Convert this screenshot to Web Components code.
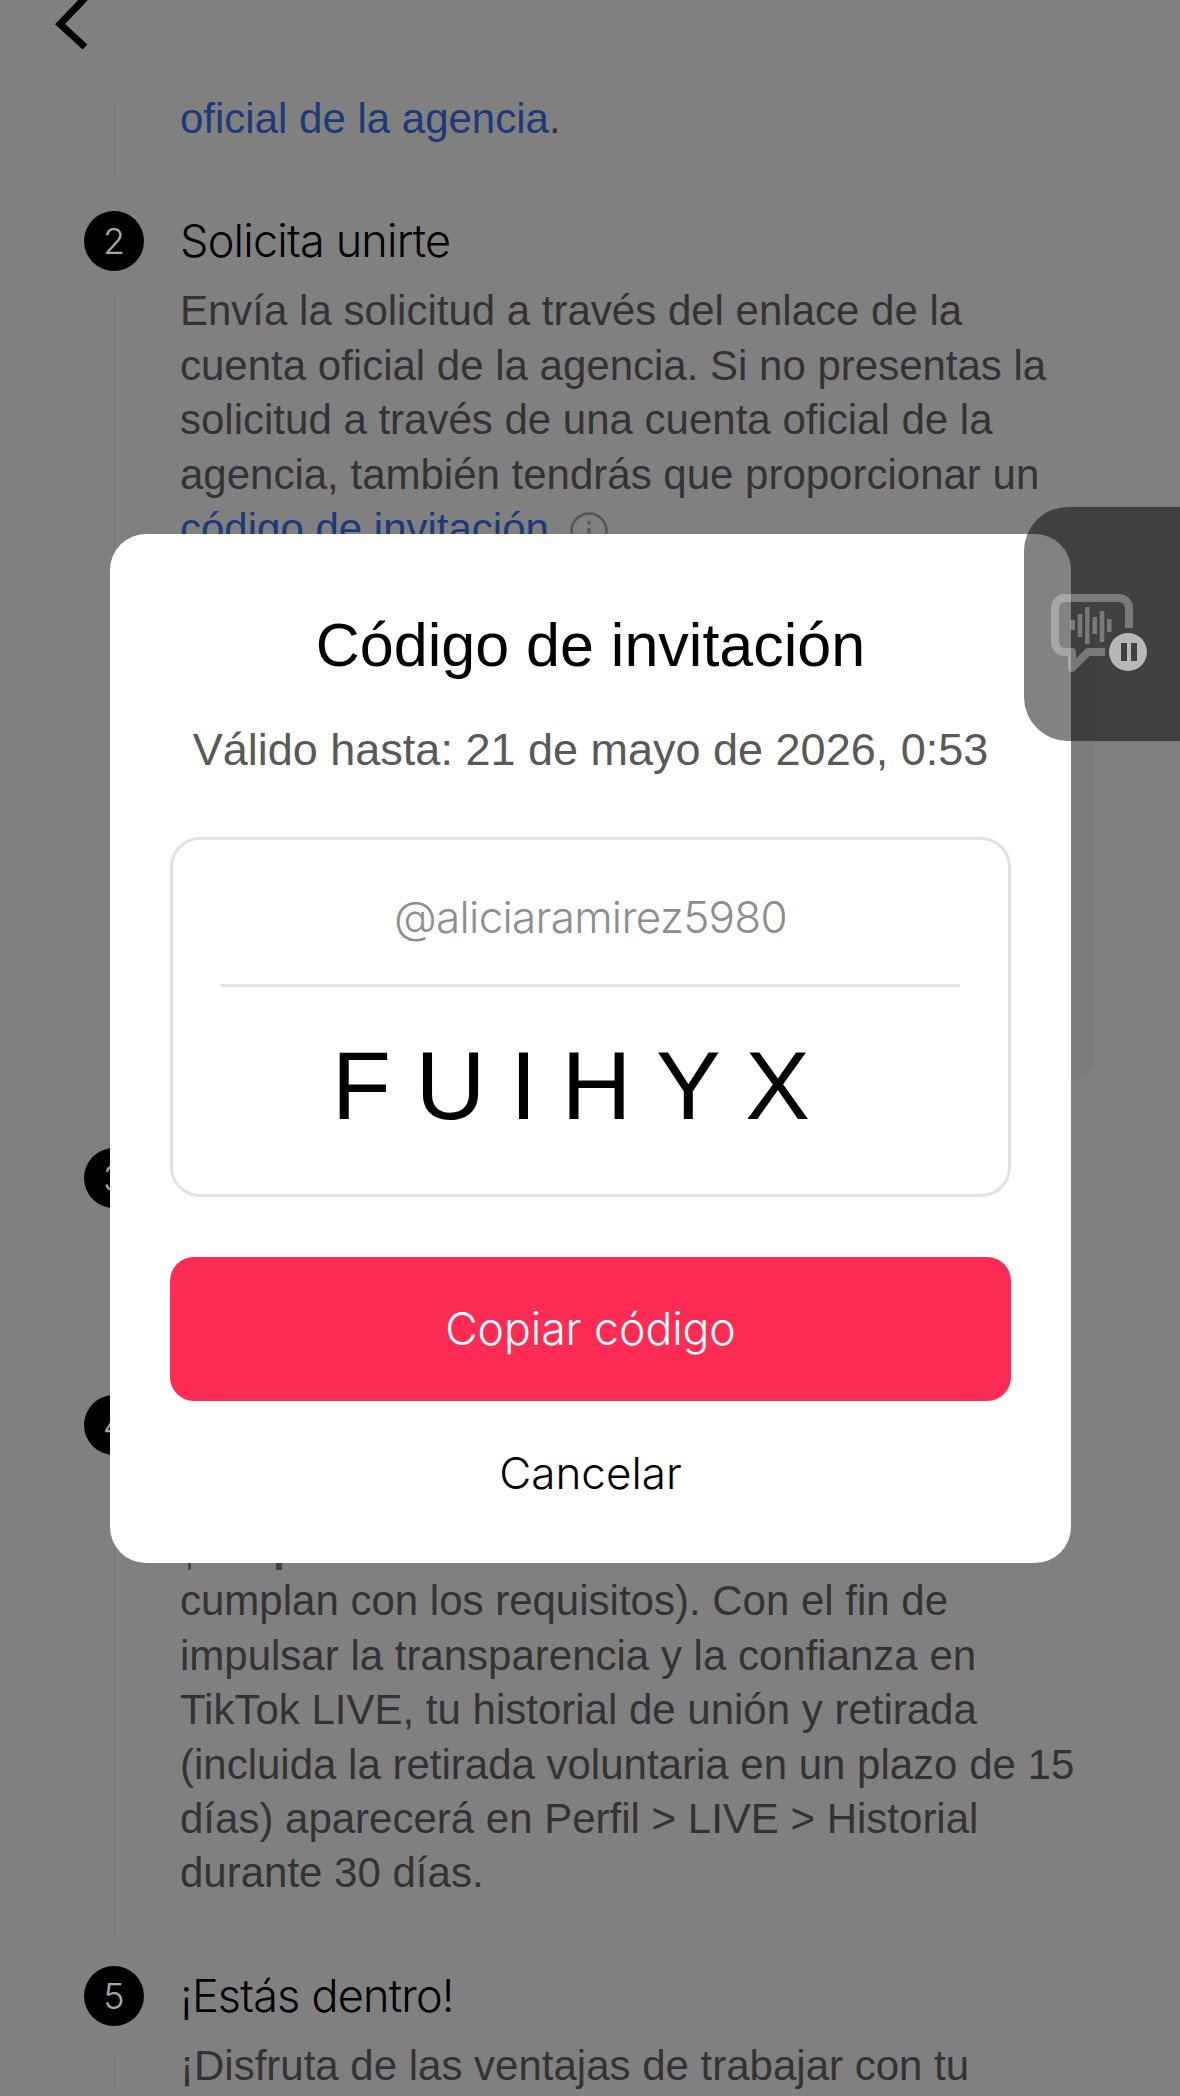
<!doctype html>
<html>
<head>
<style>
  html, body { margin: 0; padding: 0; background: #808080; }
  body { width: 1180px; height: 2096px; overflow: hidden; font-family: "Liberation Sans", Arial, sans-serif; position: relative; }
  .link { color: #1d3a78; }
  .info { vertical-align: -7px; margin-left: 9px; }
</style>
</head>
<body>

<template id="t-step">
  <style>
    :host { display: grid; grid-template-columns: 60px 1fr; column-gap: 36px; padding-left: 84px; margin-top: var(--gap, 32px); min-height: var(--min, 0); }
    .rail { display: flex; flex-direction: column; align-items: center; }
    .num { width: 60px; height: 60px; border-radius: 50%; background: #000; color: #a6a6a6; font: 300 36px/60px "Inter", sans-serif; text-align: center; flex: none; }
    .line { width: 1px; flex: 1; background: #777; margin-top: 24px; }
    h3 { margin: 0 0 13px; min-height: 60px; font: 300 45px/60px "Inter", sans-serif; letter-spacing: -0.8px; color: #000; }
    .body { font: 42px/54.4px "Liberation Sans", sans-serif; color: #333; white-space: nowrap; padding-bottom: var(--pad, 0); }
    :host([continued]) .num, :host([continued]) h3 { display: none; }
    :host([continued]) .line { margin-top: 10px; }
  </style>
  <div class="rail"><div class="num"><slot name="num"></slot></div><div class="line"></div></div>
  <div><h3><slot name="title"></slot></h3><div class="body"><slot></slot></div></div>
</template>

<template id="t-card">
  <style>
    :host { display: block; width: 915px; height: 480px; margin-top: 44px; margin-bottom: -3px; background: #7b7b7b; border-radius: 24px; }
  </style>
</template>

<template id="t-cut-line">
  <style>
    /* top margin collapses with the h3 margin above it */
    :host { display: flex; height: 8px; margin: 108px 0 3px; padding-left: 8px; }
    i { display: block; width: 3px; height: 7px; background: #444; }
    i:nth-child(1) { width: 4px; height: 5px; border-radius: 0 0 0 4px; margin-right: 96px; }
    i:nth-child(2) { margin-right: 85px; }
  </style>
  <i></i><i></i><i></i>
</template>

<template id="t-dialog">
  <style>
    :host { position: absolute; left: 110px; top: 534px; width: 961px; height: 1029px; background: #fff; border-radius: 36px; box-sizing: border-box; padding: 0 60px; display: flex; flex-direction: column; align-items: center; }
    h2 { margin: 76px 0 0; font: 400 61px/70px "Liberation Sans", sans-serif; color: #000; white-space: nowrap; }
    .valid { margin-top: 45px; font: 45px/50px "Liberation Sans", sans-serif; color: #595959; white-space: nowrap; }
    .box { margin-top: 62px; width: 841px; height: 360px; box-sizing: border-box; border: 3px solid #e2e2e2; border-radius: 30px; padding: 0 48px; display: flex; flex-direction: column; align-items: center; }
    .user { margin-top: 49px; font: 300 44px/56px "Inter", sans-serif; letter-spacing: -0.7px; color: #8e8e8e; }
    hr { width: 100%; height: 3px; margin: 39px 0 0; border: 0; background: #e2e2e2; }
    .code { margin-top: 51px; font: 400 97px/96px "Liberation Sans", sans-serif; letter-spacing: 24.5px; margin-right: 15px; color: #000; white-space: nowrap; }
    .copy { margin-top: 60px; width: 841px; height: 144px; background: #fe2c55; border-radius: 24px; color: #fff; font: 300 44.5px/144px "Inter", sans-serif; text-align: center; }
    .cancel { margin-top: 44px; font: 300 44px/56px "Inter", sans-serif; color: #000; }
  </style>
  <h2><slot name="title"></slot></h2>
  <div class="valid"><slot name="valid"></slot></div>
  <div class="box">
    <div class="user"><slot name="user"></slot></div>
    <hr>
    <div class="code"><slot name="code"></slot></div>
  </div>
  <div class="copy"><slot name="copy"></slot></div>
  <div class="cancel"><slot name="cancel"></slot></div>
</template>

<template id="t-float">
  <style>
    :host { position: absolute; left: 1024px; top: 507px; width: 156px; height: 234px; background: rgba(0,0,0,.49); border-radius: 44px 0 0 44px; }
    svg { position: absolute; left: 24px; top: 84px; }
  </style>
  <svg width="110" height="90" viewBox="0 0 110 90" fill="none">
    <path d="M81 37V17a10 10 0 0 0-10-10H17a10 10 0 0 0-10 10v34a10 10 0 0 0 10 10h7v16l16-16h17" stroke="rgba(255,255,255,.3)" stroke-width="8" stroke-linejoin="round"/>
    <path d="M24.7 29v10M32 23v23M39.3 16v37M46.7 26v17M54 20v31M61.3 28v13" stroke="rgba(255,255,255,.3)" stroke-width="4.6"/>
    <circle cx="80" cy="61" r="19" fill="#b8b8b8"/>
    <path d="M73 52h6v18h-6zM83 52h6v18h-6z" fill="#404040"/>
  </svg>
</template>

<template id="t-back">
  <style>:host { position: absolute; left: 50px; top: 0; line-height: 0; }</style>
  <svg width="40" height="54" viewBox="0 0 40 54" fill="none"><path d="M35 -2L10 24l25 23" stroke="#000" stroke-width="7"/></svg>
</template>

<script>
  class StampedElement extends HTMLElement {
    constructor(templateId) {
      super();
      const root = this.attachShadow({mode: 'open'});
      root.appendChild(document.querySelector('#' + templateId).content.cloneNode(true));
    }
  }
  customElements.define('tk-step', class extends StampedElement { constructor() { super('t-step'); } });
  customElements.define('tk-card', class extends StampedElement { constructor() { super('t-card'); } });
  customElements.define('tk-cut-line', class extends StampedElement { constructor() { super('t-cut-line'); } });
  customElements.define('tk-dialog', class extends StampedElement { constructor() { super('t-dialog'); } });
  customElements.define('tk-float', class extends StampedElement { constructor() { super('t-float'); } });
  customElements.define('tk-back', class extends StampedElement { constructor() { super('t-back'); } });
</script>

<tk-back></tk-back>

<div style="padding-top:92px">
  <tk-step continued style="--gap:0px;--pad:33px">
    <span class="link">oficial de la agencia</span>.
  </tk-step>
  <tk-step style="--pad:39px">
    <span slot="num">2</span>
    <span slot="title">Solicita unirte</span>
    Envía la solicitud a través del enlace de la<br>
    cuenta oficial de la agencia. Si no presentas la<br>
    solicitud a través de una cuenta oficial de la<br>
    agencia, también tendrás que proporcionar un<br>
    <span class="link">código de invitación</span>.<svg class="info" width="38" height="38" viewBox="0 0 38 38" fill="none"><circle cx="19" cy="19" r="17.5" stroke="#555" stroke-width="2.6"/><path d="M19 16v12M19 9v3.5" stroke="#555" stroke-width="3"/></svg>
    <tk-card></tk-card>
  </tk-step>
  <tk-step style="--min:215px">
    <span slot="num">3</span>
  </tk-step>
  <tk-step>
    <span slot="num">4</span>
    <tk-cut-line></tk-cut-line>
    cumplan con los requisitos). Con el fin de<br>
    impulsar la transparencia y la confianza en<br>
    TikTok LIVE, tu historial de unión y retirada<br>
    (incluida la retirada voluntaria en un plazo de 15<br>
    días) aparecerá en Perfil &gt; LIVE &gt; Historial<br>
    durante 30 días.
    <div style="height:35px"></div>
  </tk-step>
  <tk-step style="--gap:30px">
    <span slot="num">5</span>
    <span slot="title">¡Estás dentro!</span>
    ¡Disfruta de las ventajas de trabajar con tu
  </tk-step>
</div>

<tk-dialog>
  <span slot="title">Código de invitación</span>
  <span slot="valid">Válido hasta: 21 de mayo de 2026, 0:53</span>
  <span slot="user">@aliciaramirez5980</span>
  <span slot="code">FUIHYX</span>
  <span slot="copy">Copiar código</span>
  <span slot="cancel">Cancelar</span>
</tk-dialog>
<tk-float></tk-float>
</body>
</html>
